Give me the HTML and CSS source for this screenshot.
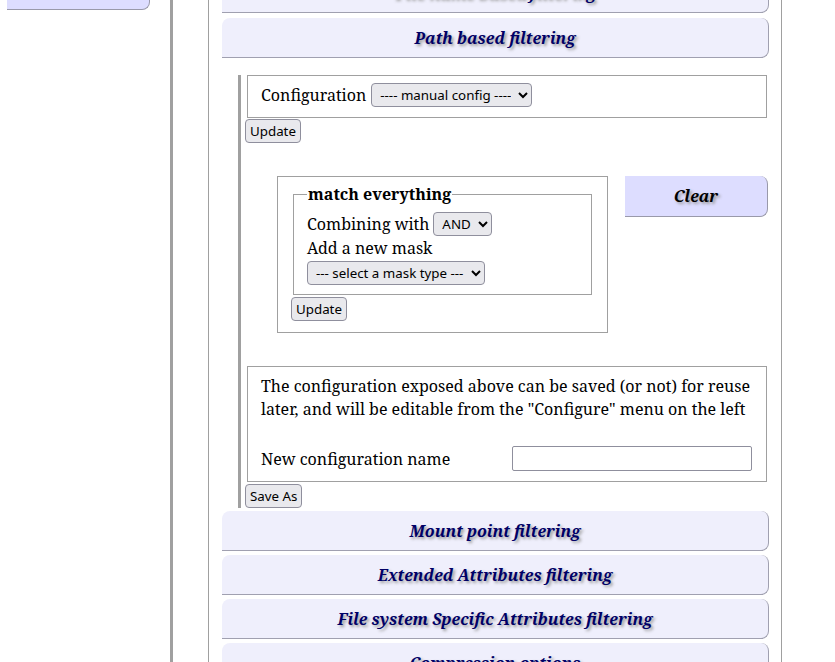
FILE: index.html
```html
<!DOCTYPE html>
<html>
<head>
<meta charset="utf-8">
<title>Filtering</title>
<link rel="stylesheet" href="styles.css">
</head>
<body>
<div class="page">
  <div class="nav">
    <div class="navbtn"></div>
  </div>
  <div class="divider"></div>
  <div class="main">
    <div class="panel">
      <div class="hdr first">File name based filtering</div>
      <div class="hdr">Path based filtering</div>
      <div class="content">
        <div class="box config">
          <span class="lbl">Configuration</span>
          <select class="sel"><option>---- manual config ----</option></select>
        </div>
        <button class="btn">Update</button>
        <div class="maskrow">
          <div class="maskbox">
            <fieldset class="fs">
              <legend>match everything</legend>
              <div class="line">Combining with <select class="sel"><option>AND</option></select></div>
              <div class="line">Add a new mask</div>
              <div class="line third"><select class="sel"><option>--- select a mask type ---</option></select></div>
            </fieldset>
            <button class="btn">Update</button>
          </div>
          <div class="clear">Clear</div>
        </div>
        <div class="box save">
          <p class="txt">The configuration exposed above can be saved (or not) for reuse later, and will be editable from the "Configure" menu on the left</p>
          <div class="namerow">
            <span class="lbl">New configuration name</span>
            <input class="inp" type="text">
          </div>
        </div>
        <button class="btn saveas">Save As</button>
      </div>
      <div class="hdr">Mount point filtering</div>
      <div class="hdr">Extended Attributes filtering</div>
      <div class="hdr">File system Specific Attributes filtering</div>
      <div class="hdr">Compression options</div>
    </div>
  </div>
</div>
</body>
</html>
```
FILE: styles.css
```css
html, body {
  margin: 0;
  padding: 0;
  background: #fff;
  overflow: hidden;
}
body {
  font-family: "Noto Serif", "DejaVu Serif", serif;
  font-size: 16px;
  color: #000;
}
.page {
  display: flex;
  align-items: stretch;
  height: 662px;
  overflow: hidden;
}
.nav {
  width: 170px;
  flex: none;
}
.navbtn {
  margin-left: 7px;
  width: 142px;
  height: 9px;
  background: #ddddff;
  border-right: 1px solid #9999aa;
  border-bottom: 1px solid #9999aa;
  border-bottom-right-radius: 8px;
}
.divider {
  width: 3px;
  flex: none;
  background: #a0a0a0;
}
.main {
  flex: none;
  padding-left: 35px;
}
.panel {
  width: 547px;
  border-left: 1px solid #a0a0a0;
  border-right: 1px solid #a0a0a0;
  padding: 0 12px 0 13px;
  margin-top: -27px;
}
.hdr {
  height: 40px;
  box-sizing: border-box;
  background: #efeffc;
  border-right: 1px solid #a0a0b0;
  border-bottom: 1px solid #a0a0b0;
  border-radius: 8px;
  border-bottom-left-radius: 0;
  text-align: center;
  font-weight: bold;
  font-style: italic;
  font-size: 16px;
  line-height: 40px;
  color: #000066;
  text-shadow: 2px 2px 3px #999;
  margin-bottom: 4px;
}
.hdr.first {
  margin-bottom: 5px;
}
.content {
  margin: 17px 0 3px 16px;
  border-left: 3px solid #a0a0a0;
  padding-left: 4px;
}
.box {
  margin-left: 2px;
  margin-right: 2px;
  border: 1px solid #a0a0a0;
  box-sizing: border-box;
}
.config {
  height: 43px;
  display: flex;
  align-items: center;
  padding-left: 13px;
  padding-bottom: 3px;
  gap: 5px;
}
.sel {
  font-family: "Noto Sans", "Open Sans", sans-serif;
  font-size: 13.33px;
  height: 24px;
  padding: 0 4px;
  color: #000;
  background: #e9e9ed;
  border: 1px solid #8f8f9d;
  border-radius: 4px;
}
.btn {
  display: block;
  font-family: "Noto Sans", "Open Sans", sans-serif;
  font-size: 13.33px;
  height: 24px;
  padding: 0 4px;
  margin: 1px 0 0 0;
  color: #000;
  background: #e9e9ed;
  border: 1px solid #8f8f9d;
  border-radius: 4px;
}
.btn.saveas {
  margin-top: 2px;
}
.maskrow {
  display: flex;
  align-items: flex-start;
  margin-top: 33px;
}
.maskbox {
  margin-left: 32px;
  width: 331px;
  height: 157px;
  box-sizing: border-box;
  border: 1px solid #a0a0a0;
  padding: 0 15px 0 13px;
}
.fs {
  margin: 6px 0 0 2px;
  padding: 7px 13px 9px 13px;
  border: 1px solid #a0a0a0;
}
.fs legend {
  font-weight: bold;
  padding: 0 1px;
  line-height: 22px;
}
.line {
  display: flex;
  align-items: center;
  gap: 4px;
  height: 24px;
}
.line.third {
  margin-top: 1px;
}
.fs + .btn {
  margin-top: 2px;
}
.clear {
  margin-left: 17px;
  width: 143px;
  height: 41px;
  box-sizing: border-box;
  background: #ddddff;
  border-right: 1px solid #9999aa;
  border-bottom: 1px solid #9999aa;
  border-top-right-radius: 8px;
  border-bottom-right-radius: 8px;
  text-align: center;
  line-height: 40px;
  font-weight: bold;
  font-style: italic;
  color: #000;
  text-shadow: 2px 2px 3px #999;
}
.save {
  margin-top: 33px;
  height: 116px;
  padding: 8px 13px 0 13px;
}
.txt {
  margin: 0;
  line-height: 23px;
}
.namerow {
  display: flex;
  align-items: center;
  margin-top: 25px;
}
.inp {
  width: 240px;
  height: 25px;
  box-sizing: border-box;
  border: 1px solid #8f8f9d;
  border-radius: 2px;
  margin-left: auto;
  margin-right: 1px;
}
```
